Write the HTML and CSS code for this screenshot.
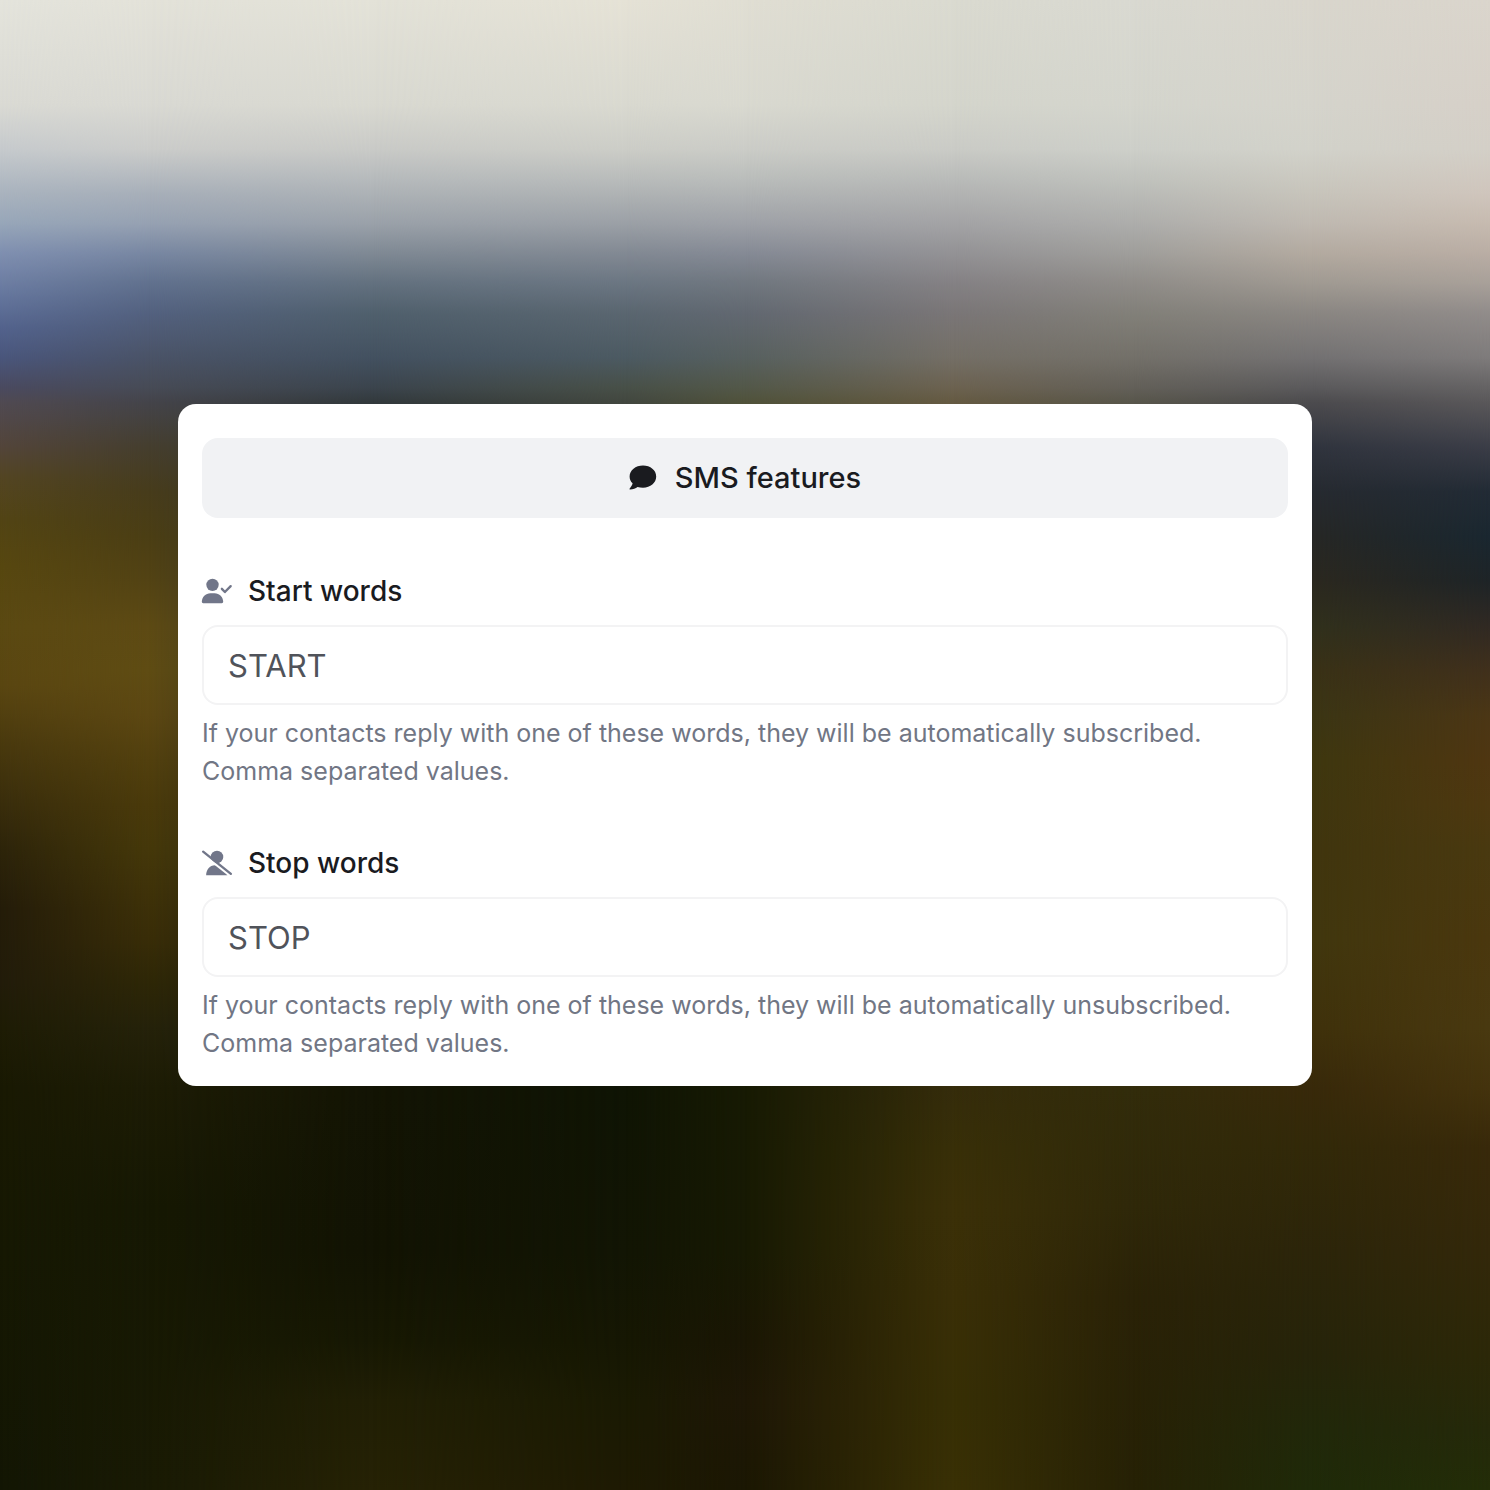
FILE: index.html
```html
<!DOCTYPE html>
<html lang="en">
  <head>
    <meta charset="UTF-8" />
    <meta name="viewport" content="width=device-width, initial-scale=1.0" />
    <title>SMS features</title>
    <link rel="stylesheet" href="styles.css">
  </head>
  <body>
    <div class="backdrop" aria-hidden="true">
      <div class="band band1"></div>
      <div class="band band2"></div>
      <div class="band band3"></div>
      <div class="band band4"></div>
      <div class="band band5"></div>
      <div class="band band6"></div>
      <div class="band band7"></div>
      <div class="band band8"></div>
      <div class="band band9"></div>
    </div>
    <form class="card">
      <h1 class="card-title">
        <svg class="title-icon" viewBox="0 0 28 26" aria-hidden="true">
          <path d="M14 .5C6.600 .5 .6 5.400 .6 11.400c0 2.700 1.100 5 3 6.900-.4 2-1.600 3.700-2.900 5.100-.4.4-.1 1 .4 1 3 0 5.600-1.200 7.400-2.500 1.700.5 3.500.8 5.500.8 7.400 0 13.200-4.900 13.200-11.200S21.400 .5 14 .5z"/>
        </svg>
        SMS features
      </h1>
      <div class="field">
        <label for="startWords">
          <svg class="label-icon" viewBox="0 0 640 512" aria-hidden="true">
            <circle cx="224" cy="124" r="132"/>
            <path d="M-4 486c0-102 82-184 184-184h88c102 0 184 82 184 184 0 17-13 30-30 30H26c-17 0-30-13-30-30z"/>
            <path class="stroke" d="M424 210l64 68 124-126"/>
          </svg>
          Start words
        </label>
        <input type="text" id="startWords" value="START" aria-describedby="startHelp">
        <p class="help" id="startHelp">If your contacts reply with one of these words, they will be automatically subscribed. Comma separated values.</p>
      </div>
      <div class="field">
        <label for="stopWords">
          <svg class="label-icon" viewBox="0 0 640 512" aria-hidden="true">
            <circle cx="320" cy="126" r="134"/>
            <path d="M88 516c0-118 72-214 190-214h70l196 214z"/>
            <path class="gap" d="M-30 34l640 502"/>
            <path class="stroke" d="M24 14l592 474"/>
          </svg>
          Stop words
        </label>
        <input type="text" id="stopWords" value="STOP" aria-describedby="stopHelp">
        <p class="help" id="stopHelp">If your contacts reply with one of these words, they will be automatically unsubscribed. Comma separated values.</p>
      </div>
    </form>
  </body>
</html>
```
FILE: styles.css
```css
* {
  box-sizing: border-box;
}
body {
  margin: 0;
  min-height: 100vh;
  padding: 24px;
  display: flex;
  align-items: center;
  justify-content: center;
  font-family: Inter, 'Liberation Sans', sans-serif;
  background-color: #15180a;
  color: #1a1b1f;
}

/* Blurred landscape: each band fades in over the one before it */
.backdrop {
  position: fixed;
  inset: 0;
  z-index: -1;
}
.band {
  position: absolute;
  inset: 0;
}
.band1 {
  background: linear-gradient(#e4e4dc 0%, #dadad4 7%, #c6cacd 10%, #a9b3be 13%, #97a6b9 15%, #7f8fb0 17%, #64759c 20%, #53638d 22%, #4a567c 24%, #4a4a60 26%, #504a52 27%, #53453a 30%, #534523 32%, #524414 35%, #574710 38%, #5b4912 42%, #5a4611 46%, #49390e 50%, #392d0c 54%, #2d240a 57%, #241c09 61%, #221c0a 66%, #1e1c05 69%, #191903 73%, #161803 84%, #131604 100%);
}
.band2 {
  background: linear-gradient(#e3e2d9 0%, #d9d9d3 7%, #cbccca 10%, #a7afb9 13%, #96a1b2 15%, #7887a2 17%, #61718e 19%, #53617f 21%, #4a5367 24%, #474b56 26%, #44444a 27%, #453e2e 30%, #473c1b 33%, #4b3e14 36%, #534314 39%, #5d4a14 42%, #5f4c13 45%, #5c4712 48%, #52400e 51%, #4a3a0b 54%, #45380a 57%, #3f3209 60%, #392d08 63%, #2e2707 66%, #25220a 69%, #1d1c05 73%, #161803 81%, #191a04 100%);
  mask-image: linear-gradient(to right, transparent 0%, #000 10%);
}
.band3 {
  background: linear-gradient(#e3e2d8 0%, #d9d9d1 7%, #c9cac7 10%, #b6babc 12%, #9aa1a9 15%, #7f8994 17%, #63717f 19%, #50606d 21%, #435160 24%, #3b444d 26%, #32393c 27%, #131404 73%, #121303 84%, #171803 90%, #211f05 94%, #262205 100%);
  mask-image: linear-gradient(to right, transparent 10%, #000 25%);
}
.band4 {
  background: linear-gradient(#e5e2d6 0%, #d9d9d0 7%, #cccdc7 10%, #b9bcbb 12%, #9ba0a6 15%, #828993 17%, #6b7682 19%, #5a6670 21%, #4c5a62 24%, #485048 26%, #42473f 27%, #0f1404 73%, #121504 84%, #161703 90%, #1a1a03 94%, #1e1a03 100%);
  mask-image: linear-gradient(to right, transparent 25%, #000 42%);
}
.band5 {
  background: linear-gradient(#e0ded3 0%, #d9d9d0 7%, #cbccc7 10%, #babdbb 12%, #9ea1a7 15%, #858a95 17%, #70777f 19%, #626871 21%, #57605f 24%, #535849 26%, #50523a 27%, #171a03 73%, #171903 84%, #1a1604 90%, #1e1706 94%, #1b1703 100%);
  mask-image: linear-gradient(to right, transparent 42%, #000 50%);
}
.band6 {
  background: linear-gradient(#dadad0 0%, #d4d5cc 7%, #cacbc6 10%, #b9bbb9 12%, #a3a3a5 15%, #939295 17%, #848184 19%, #7a7677 21%, #746f66 24%, #6c6250 26%, #655a42 27%, #352c0b 73%, #382f08 77%, #3b3008 81%, #3a2f07 87%, #372f05 94%, #393005 100%);
  mask-image: linear-gradient(to right, transparent 50%, #000 64%);
}
.band7 {
  background: linear-gradient(#d9d9d1 0%, #d4d5cd 7%, #cdcfc9 10%, #c0c2bd 12%, #adadab 15%, #9f9e9b 17%, #8f8c88 19%, #828079 21%, #737069 24%, #636059 26%, #58564b 27%, #322c0b 73%, #2f2809 81%, #2a2207 87%, #262105 100%);
  mask-image: linear-gradient(to right, transparent 64%, #000 76%);
}
.band8 {
  background: linear-gradient(#d9d6cd 0%, #d5d4cc 7%, #d2d2ca 10%, #c7c4bb 13%, #bfb9b1 15%, #b3aaa0 17%, #a09a92 19%, #8a8682 21%, #737172 24%, #5b5a5c 26%, #4c4b4e 27%, #30343e 30%, #262a30 33%, #262725 36%, #2b281f 39%, #30301c 42%, #393116 45%, #3b3514 48%, #3e370f 51%, #40350e 57%, #41370e 63%, #3f310b 69%, #38290a 73%, #322909 77%, #2c250a 84%, #26240a 91%, #21280a 96%, #1f2a09 100%);
  mask-image: linear-gradient(to right, transparent 76%, #000 88%);
}
.band9 {
  background: linear-gradient(#dad5cc 0%, #d6d0c8 7%, #d3cfc7 10%, #cfc5bc 13%, #c6baaf 15%, #b9ada4 17%, #a8a099 19%, #918c8a 21%, #7e7b7b 24%, #656364 26%, #5a585a 27%, #3b3d47 30%, #222b35 33%, #1a2730 36%, #1e2427 39%, #302923 42%, #40301c 45%, #4b3615 48%, #4f3611 51%, #4e3810 54%, #493910 57%, #4a370e 63%, #493910 69%, #44330d 73%, #38290a 77%, #33280a 84%, #2c2808 91%, #25290a 96%, #232d08 100%);
  mask-image: linear-gradient(to right, transparent 88%, #000 100%);
}

.card {
  width: 100%;
  max-width: 1134px;
  padding: 34px 24px 24px;
  border-radius: 18px;
  background: #fff;
}
.card-title {
  display: flex;
  align-items: center;
  justify-content: center;
  gap: 18px;
  margin: 0;
  padding: 20px;
  border-radius: 16px;
  background: #f1f2f4;
  font-size: 29px;
  font-weight: 500;
  line-height: 40px;
}
.title-icon {
  width: 28px;
  height: 26px;
  fill: currentColor;
}
.field {
  margin-top: 54px;
}
label {
  display: flex;
  align-items: center;
  gap: 16px;
  margin-bottom: 15px;
  font-size: 28px;
  font-weight: 500;
  line-height: 38px;
}
.label-icon {
  width: 30px;
  height: 24px;
  fill: #717689;
  overflow: visible;
}
.label-icon .stroke {
  fill: none;
  stroke: #717689;
  stroke-width: 50;
  stroke-linecap: round;
  stroke-linejoin: round;
}
.label-icon .gap {
  fill: none;
  stroke: #fff;
  stroke-width: 46;
}
input {
  display: block;
  width: 100%;
  height: 80px;
  padding: 0 24px;
  border: 2px solid #f3f3f4;
  border-radius: 16px;
  background: #fff;
  color: #50535a;
  font-family: inherit;
  font-size: 31px;
}
.help {
  margin: 9px 0 0;
  color: #717684;
  font-size: 25px;
  line-height: 38px;
}
```
